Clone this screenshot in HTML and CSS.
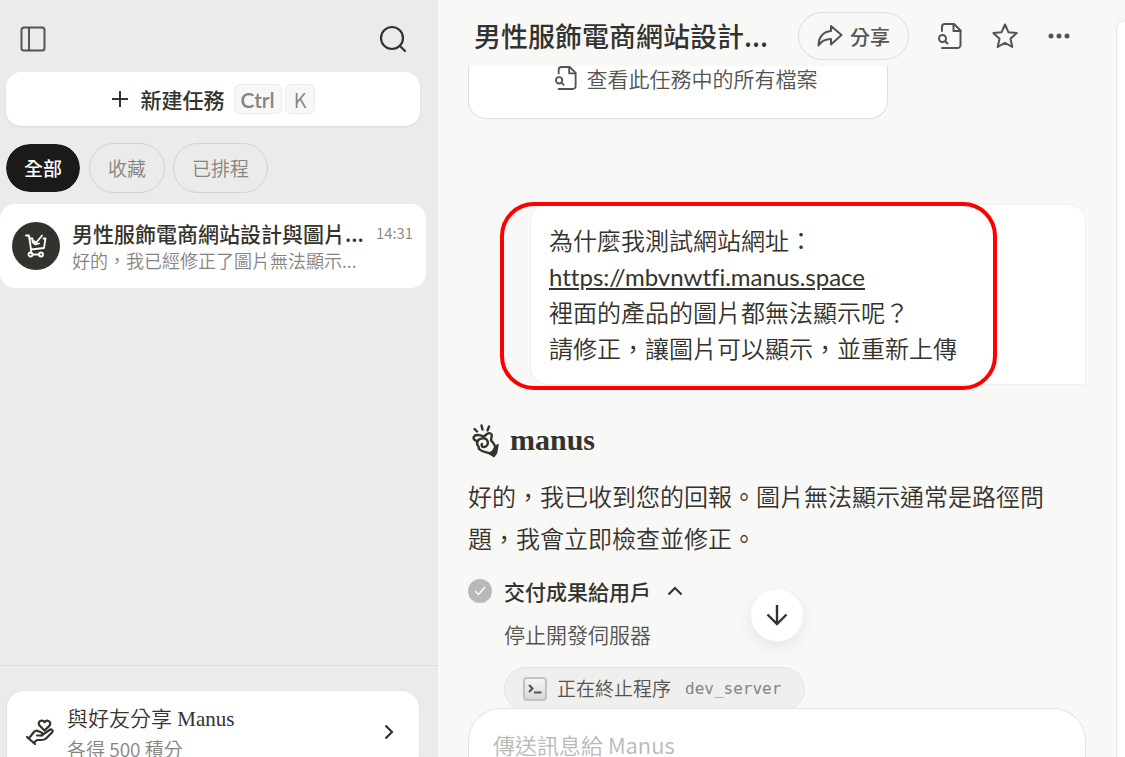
FILE: index.html
```html
<!DOCTYPE html>
<html lang="zh-Hant">
<head>
<meta charset="utf-8">
<meta name="viewport" content="width=device-width, initial-scale=1">
<title>Manus</title>
<link rel="stylesheet" href="styles.css">
</head>
<body>
<div class="app">
  <aside class="sidebar">
    <div class="sidebar-top">
      <button class="icon-btn muted" aria-label="收合側邊欄">
        <svg width="26" height="26" viewBox="0 0 26 26" fill="none" stroke="currentColor" stroke-width="2"><rect x="1.500" y="1.500" width="23" height="23" rx="2.500"/><path d="M9 1.500v23"/></svg>
      </button>
      <button class="icon-btn" aria-label="搜尋">
        <svg width="28" height="28" viewBox="0 0 28 28" fill="none" stroke="currentColor" stroke-width="2.200" stroke-linecap="round"><circle cx="13" cy="13" r="11"/><path d="M21 21l5 5"/></svg>
      </button>
    </div>

    <button class="new-task">
      <svg width="18" height="18" viewBox="0 0 18 18" fill="none" stroke="currentColor" stroke-width="2"><path d="M9 1v16M1 9h16"/></svg>
      <span class="new-task-label">新建任務</span>
      <span class="keys"><kbd class="key key-bold">Ctrl</kbd><kbd class="key">K</kbd></span>
    </button>

    <div class="tabs">
      <button class="tab tab-active">全部</button>
      <button class="tab">收藏</button>
      <button class="tab">已排程</button>
    </div>

    <a class="task" href="#">
      <span class="avatar">
        <svg width="24" height="26" viewBox="0 0 24 26" fill="none" stroke="currentColor" stroke-width="1.800" stroke-linecap="round" stroke-linejoin="round"><path d="M2 2.500h3l2 14L20 15l1.500-9.500h-2"/><path d="M5.500 5.500h3v3.500l3 2.500 3.500-1"/><path d="M10 8l2 2 6-7.500"/><path d="M7 17v3M8.500 21.500h7"/><circle cx="6.500" cy="21.500" r="2"/><circle cx="17" cy="21.500" r="2"/></svg>
      </span>
      <span class="task-body">
        <span class="task-row"><span class="task-title">男性服飾電商網站設計與圖片...</span><time class="task-time">14:31</time></span>
        <span class="task-sub">好的，我已經修正了圖片無法顯示...</span>
      </span>
    </a>

    <div class="sidebar-foot">
      <a class="invite" href="#">
        <svg width="28" height="26" viewBox="0 0 28 26" fill="none" stroke="currentColor" stroke-width="2.200" stroke-linecap="round" stroke-linejoin="round"><path d="M18.500 11.500l-5-5c-1.300-1.500-.8-4 1.200-4.700 1.500-.5 3 .2 3.800 1.400.8-1.200 2.500-1.900 4-1.300 2 .8 2.300 3.200 1 4.700z"/><path d="M1 18l8 7M3.500 18.500L8 13c1.300-1.500 3.300-1.500 4.500-.8l3 1.300c1.600.8 1.300 3-.5 3h-4"/><path d="M15.500 16.500l8-5.500c2-1.300 4.200.4 2.500 2.500l-6 6c-1.300 1.200-3 1.500-5 1.500h-4l-3 2.500"/></svg>
        <span class="invite-text"><span class="invite-title">與好友分享 Manus</span><span class="invite-sub">各得 500 積分</span></span>
        <svg width="10" height="16" viewBox="0 0 10 16" fill="none" stroke="currentColor" stroke-width="2.200"><path d="M1.500 1.500L8 8l-6.500 6.500"/></svg>
      </a>
    </div>
  </aside>

  <main class="main">
    <header class="header">
      <h1 class="title">男性服飾電商網站設計...</h1>
      <button class="share">
        <svg width="26" height="24" viewBox="0 0 26 24" fill="none" stroke="currentColor" stroke-width="2" stroke-linejoin="round"><path d="M14 2l10.500 9L14 20.500V15C8 15 4.500 16.500 1.500 21.500 1.500 13 6.500 7.500 14 7z"/></svg>
        <span>分享</span>
      </button>
      <button class="icon-btn muted" aria-label="檔案">
        <svg width="26" height="26" viewBox="0 0 24 26" fill="none" stroke="currentColor" stroke-width="2" stroke-linecap="round" stroke-linejoin="round"><path d="M4 8V4a3 3 0 0 1 3-3h9l6.500 6.500V22a3 3 0 0 1-3 3H4"/><path d="M15.500 1v7h7"/><circle cx="4.500" cy="15.500" r="3.500"/><path d="M7.500 18.500l2 2"/></svg>
      </button>
      <button class="icon-btn muted" aria-label="收藏">
        <svg width="28" height="28" viewBox="0 0 28 28" fill="none" stroke="currentColor" stroke-width="2" stroke-linejoin="round"><path d="M14 2.500l3.400 7.700 8.300.9-6.200 5.600 1.800 8.300L14 20.800 6.700 25l1.800-8.300-6.200-5.600 8.300-.9z"/></svg>
      </button>
      <button class="icon-btn muted" aria-label="更多">
        <svg width="24" height="8" viewBox="0 0 24 8" fill="currentColor"><circle cx="4" cy="4" r="2.500"/><circle cx="12" cy="4" r="2.500"/><circle cx="20" cy="4" r="2.500"/></svg>
      </button>
    </header>

    <section class="feed">
      <a class="files" href="#">
        <svg width="22" height="24" viewBox="0 0 24 26" fill="none" stroke="currentColor" stroke-width="2" stroke-linecap="round" stroke-linejoin="round"><path d="M4 8V4a3 3 0 0 1 3-3h9l6.500 6.500V22a3 3 0 0 1-3 3H4"/><path d="M15.500 1v7h7"/><circle cx="4.500" cy="15.500" r="3.500"/><path d="M7.500 18.500l2 2"/></svg>
        <span>查看此任務中的所有檔案</span>
      </a>

      <div class="bubble">
        為什麼我測試網站網址：<br>
        <a class="link" href="#">https://mbvnwtfi.manus.space</a><br>
        裡面的產品的圖片都無法顯示呢？<br>
        請修正，讓圖片可以顯示，並重新上傳
        <span class="marker"></span>
      </div>

      <div class="brand">
        <svg width="28" height="34" viewBox="0 0 28 34" fill="none" stroke="currentColor" stroke-width="2.400" stroke-linecap="round" stroke-linejoin="round"><path d="M2.500 5l2.500 2.500M9.500 1.500l1 4M17 2.500l-1.500 4"/><path d="M5.500 17C2 16.500.5 14 2.500 12c2-1.800 5.500-1 9.500.500l3-2.500c3-2 5.500 0 4.500 3l-.5 3.500c2 1.500 3.500 4 4.500 6.500"/><path d="M5.500 17c2-2.500 7-4 9.500-1 2 3 .5 6.500-2.500 7-2.500.3-3.500-1.500-2.500-3"/><path d="M5.500 17c-1 2.500-.5 4 1 5.500l.5 2.500c3 3 7 3 11 4.500"/><path d="M26 20.500l-1.500 8.500-2.500 3.500-5.500-3.500c3-.5 5-2.500 6-5.500z" fill="currentColor" stroke-width="1.500"/></svg>
        <span class="brand-name">manus</span>
      </div>

      <p class="reply">好的，我已收到您的回報。圖片無法顯示通常是路徑問題，我會立即檢查並修正。</p>

      <div class="step">
        <span class="check"><svg width="12" height="10" viewBox="0 0 12 10" fill="none" stroke="currentColor" stroke-width="1.500"><path d="M1 5l3.500 3.500L11 1"/></svg></span>
        <button class="step-toggle">交付成果給用戶
          <svg width="16" height="10" viewBox="0 0 16 10" fill="none" stroke="currentColor" stroke-width="2"><path d="M1.500 8.500L8 2l6.500 6.500"/></svg>
        </button>
      </div>
      <p class="step-note">停止開發伺服器</p>
      <div class="tool">
        <span class="term"><svg width="14" height="10" viewBox="0 0 14 10" fill="none" stroke="currentColor" stroke-width="2"><path d="M1 1l3.500 3.500L1 8M6 8.500h7.500"/></svg></span>
        <span class="tool-name">正在終止程序</span>
        <code class="tool-arg">dev_server</code>
      </div>
      <button class="to-bottom" aria-label="捲動到底部">
        <svg width="22" height="22" viewBox="0 0 22 22" fill="none" stroke="currentColor" stroke-width="2.400"><path d="M11 1v18M1.500 10.500L11 20l9.500-9.500"/></svg>
      </button>
    </section>

    <div class="composer">
      <input class="composer-input" type="text" placeholder="傳送訊息給 Manus" aria-label="傳送訊息給 Manus">
    </div>
  </main>
  <div class="panel"></div>
</div>
</body>
</html>
```
FILE: styles.css
```css
* { box-sizing: border-box; }

body {
  margin: 0;
  background: #f8f8f7;
  color: #34322d;
  font-family: "Noto Sans CJK TC", sans-serif;
  font-weight: 350;
}

button, input { font: inherit; color: inherit; }
button { border: 0; background: none; padding: 0; }
a { color: inherit; text-decoration: none; }
p, h1 { margin: 0; }
svg { display: block; flex: none; }

.app {
  display: grid;
  grid-template-columns: 438px minmax(0, 1fr) 9px;
  height: 100vh;
  overflow: hidden;
}

.icon-btn { display: flex; }
.muted { color: #535350; }

.sidebar {
  display: flex;
  flex-direction: column;
  min-height: 0;
  background: #ebebeb;
}
.sidebar-top {
  display: flex;
  align-items: center;
  justify-content: space-between;
  height: 72px;
  padding: 6px 31px 0 20px;
}
.new-task {
  display: flex;
  align-items: center;
  justify-content: center;
  height: 54px;
  margin: 0 18px 0 6px;
  border-radius: 15px;
  background: #fff;
  box-shadow: 0 1px 3px rgba(0, 0, 0, .08);
}
.new-task-label {
  margin: 0 9px 0 12px;
  font-size: 21px;
  font-weight: 500;
}
.keys { display: flex; gap: 3px; }
.key {
  height: 30px;
  padding: 0 8px;
  border: 1px solid #ececec;
  border-radius: 6px;
  background: #f7f7f7;
  color: #858481;
  font-family: "Noto Sans CJK TC", sans-serif;
  font-size: 20px;
  line-height: 30px;
}
.key-bold { padding: 0 6px; font-family: Lato, sans-serif; font-size: 21px; font-weight: 600; }

.tabs {
  display: flex;
  gap: 8px;
  padding: 17px 5px 11px;
}
.tab {
  height: 50px;
  padding: 0 18px 2px;
  border: 1px solid #d2d2d2;
  border-radius: 25px;
  color: #858481;
  font-size: 19px;
}
.tab-active {
  border-color: #ebebeb;
  background: #1a1a19;
  background-clip: padding-box;
  color: #fff;
  font-weight: 500;
}

.task {
  display: flex;
  align-items: center;
  gap: 12px;
  height: 84px;
  margin-right: 12px;
  padding: 0 13px 0 12px;
  border-radius: 15px;
  background: #fff;
}
.avatar {
  display: grid;
  flex: none;
  place-items: center;
  width: 48px;
  height: 48px;
  border-radius: 50%;
  background: #34322d;
  color: #fff;
}
.task-body { flex: 1; min-width: 0; white-space: nowrap; }
.task-row { display: flex; align-items: center; justify-content: space-between; line-height: 28px; }
.task-title { font-size: 21px; font-weight: 500; }
.task-time { color: #858481; font-size: 15px; }
.task-sub { display: block; color: #858481; font-size: 18px; line-height: 26px; }

.sidebar-foot {
  height: 92px;
  margin-top: auto;
  padding: 24px 18px 0 6px;
  border-top: 1px solid #dcdcdc;
}
.invite {
  display: flex;
  align-items: center;
  height: 84px;
  padding: 0 25px 0 19px;
  border: 1px solid #e3e3e3;
  border-radius: 18px;
  background: #fff;
}
.invite-text { flex: 1; margin-left: 13px; padding-top: 4px; }
.invite-title {
  display: block;
  font-family: "Liberation Serif", "Noto Sans CJK TC", serif;
  font-size: 21px;
  line-height: 30px;
}
.invite-sub { display: block; color: #858481; font-size: 19px; line-height: 30px; }

.main {
  display: flex;
  flex-direction: column;
  min-width: 0;
  min-height: 0;
}
.header {
  display: flex;
  align-items: center;
  flex: none;
  gap: 28px;
  height: 66px;
  padding: 6px 45px 0 36px;
}
.header > * { flex: none; }
.header .title {
  flex: 1;
  min-width: 0;
  font-size: 27px;
  font-weight: 500;
  line-height: 40px;
  white-space: nowrap;
}
.share {
  display: flex;
  align-items: center;
  gap: 7px;
  height: 48px;
  padding: 0 18px;
  border: 1px solid #dcdcdb;
  border-radius: 24px;
  color: #535350;
  font-size: 20px;
  font-weight: 500;
}

.feed {
  position: relative;
  flex: 1;
  min-height: 0;
  padding: 0 30px;
  overflow: hidden;
}
.files {
  display: flex;
  align-items: center;
  justify-content: center;
  gap: 10px;
  width: 420px;
  padding: 0 0 28px 16px;
  border: 1px solid #dfdfde;
  border-top: 0;
  border-radius: 0 0 18px 18px;
  background: #fff;
  color: #535350;
  font-size: 21px;
  line-height: 24px;
}
.bubble {
  position: relative;
  margin: 85px 0 0 62px;
  padding: 17px 18px 18px;
  border: 1px solid #f0f0ef;
  border-radius: 18px 18px 0 18px;
  background: #fff;
  font-size: 24px;
  line-height: 36px;
}
.link {
  font-family: Lato, sans-serif;
  font-variant-ligatures: none;
  font-weight: 400;
  line-height: 24px;
  text-decoration: underline;
}
.marker {
  position: absolute;
  inset: -3px 88px -6px -31px;
  border: 4px solid #f00;
  border-radius: 34px;
  pointer-events: none;
}
.brand {
  display: flex;
  align-items: center;
  gap: 10px;
  margin: 39px 0 0 4px;
}
.brand-name {
  padding-bottom: 3px;
  font-family: "Liberation Serif", serif;
  font-size: 30px;
  font-weight: 700;
  line-height: 31px;
}
.reply { margin-top: 17px; font-size: 24px; line-height: 42px; }
.step {
  display: flex;
  align-items: center;
  gap: 12px;
  margin-top: 16px;
}
.check {
  display: grid;
  place-items: center;
  width: 24px;
  height: 24px;
  border-radius: 50%;
  background: #b9b9b7;
  color: #fff;
}
.step-toggle {
  display: flex;
  align-items: center;
  gap: 16px;
  font-size: 21px;
  font-weight: 500;
  line-height: 32px;
}
.step-note {
  margin: 11px 0 0 36px;
  color: #535350;
  font-size: 21px;
  line-height: 32px;
}
.tool {
  display: flex;
  align-items: center;
  width: fit-content;
  height: 44px;
  margin: 17px 0 0 36px;
  padding: 0 23px 0 18px;
  border: 1px solid #e4e4e3;
  border-radius: 22px;
  background: #efefee;
  color: #535350;
}
.term {
  display: grid;
  place-items: center;
  width: 24px;
  height: 24px;
  border: 2px solid #c2c2c1;
  border-radius: 4px;
  background: linear-gradient(#f5f5f4, #d8d8d7);
}
.tool-name { margin: 0 14px 0 10px; font-size: 19px; line-height: 28px; padding-bottom: 2px; }
.tool-arg { padding-bottom: 2px; color: #858481; font-family: "DejaVu Sans Mono", monospace; font-size: 16px; }
.to-bottom {
  position: absolute;
  bottom: 67px;
  left: 50%;
  display: grid;
  place-items: center;
  width: 52px;
  height: 52px;
  margin-left: -26px;
  border-radius: 50%;
  background: #fff;
  box-shadow: 0 0 0 1px #f0f0ef, 0 6px 16px rgba(0, 0, 0, .08);
}

.composer {
  flex: none;
  height: 49px;
  margin: 0 30px;
  padding: 19px 24px 0;
  border: 1px solid #e4e4e6;
  border-bottom: 0;
  border-radius: 33px 33px 0 0;
  background: #fff;
}
.composer-input {
  width: 100%;
  height: 32px;
  padding: 0;
  border: 0;
  outline: 0;
  background: none;
  font-size: 22px;
}
.composer-input::placeholder { color: #b9b9b7; opacity: 1; }

.panel {
  margin-top: 20px;
  border: 1px solid #e6e6e8;
  border-width: 1px 0 0 1px;
  border-radius: 18px 0 0 0;
  background: #fff;
}
```
